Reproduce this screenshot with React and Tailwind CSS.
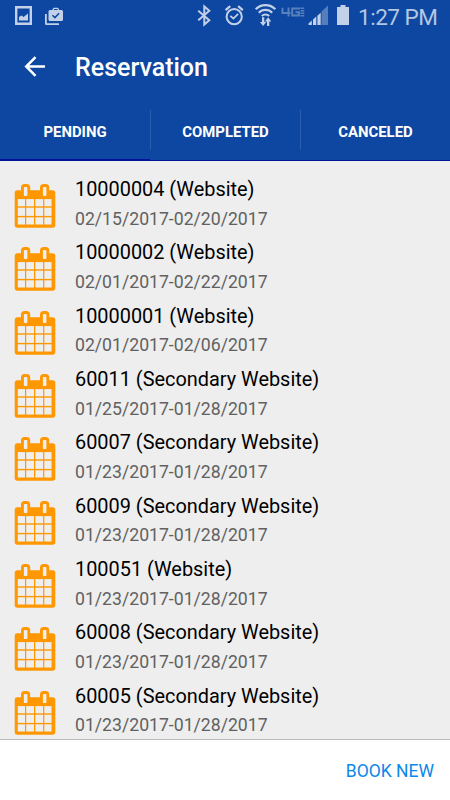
import { useState } from 'react';

const TABS = ['PENDING', 'COMPLETED', 'CANCELED'];

const RESERVATIONS = [
  { id: '10000004', source: 'Website', dates: '02/15/2017-02/20/2017' },
  { id: '10000002', source: 'Website', dates: '02/01/2017-02/22/2017' },
  { id: '10000001', source: 'Website', dates: '02/01/2017-02/06/2017' },
  { id: '60011', source: 'Secondary Website', dates: '01/25/2017-01/28/2017' },
  { id: '60007', source: 'Secondary Website', dates: '01/23/2017-01/28/2017' },
  { id: '60009', source: 'Secondary Website', dates: '01/23/2017-01/28/2017' },
  { id: '100051', source: 'Website', dates: '01/23/2017-01/28/2017' },
  { id: '60008', source: 'Secondary Website', dates: '01/23/2017-01/28/2017' },
  { id: '60005', source: 'Secondary Website', dates: '01/23/2017-01/28/2017' },
];

function CalendarIcon() {
  return (
    <svg width="42" height="44" viewBox="0 0 42 44" className="shrink-0">
      <rect x="0.7" y="6.2" width="40.6" height="37.5" rx="2.6" fill="#ff9800" />
      <rect x="7" y="0" width="9.2" height="15" rx="3.6" fill="#ff9800" />
      <rect x="26" y="0" width="9.2" height="15" rx="3.6" fill="#ff9800" />
      <g fill="#eeeeee">
        <rect x="9.9" y="2.9" width="3.5" height="9.2" rx="0.8" />
        <rect x="28.9" y="2.9" width="3.5" height="9.2" rx="0.8" />
        {[15.1, 23.7, 33.3].map((y, row) =>
          [3.8, 12.2, 21.3, 30.3].map((x, col) => (
            <rect
              key={`${x}-${y}`}
              x={x}
              y={y}
              width={col === 0 || col === 3 ? 7.2 : 7.8}
              height={row === 1 ? 8.2 : 7.2}
            />
          ))
        )}
      </g>
    </svg>
  );
}

function StatusBar() {
  return (
    <div className="flex h-8 items-center text-[#c3d1e8]">
      <svg width="450" height="32" viewBox="0 0 450 32" fill="currentColor">
        {/* screenshot saved */}
        <path fillRule="evenodd" d="M15 6h17v19H15zM17.4 8.6v13.8h12.2V8.6z" />
        <path d="M19 20.500v-3.500l2.500-1.500 2 1.500 4.500-3.500v7z" />
        {/* briefcase */}
        <path d="M45 14h1.800v9.300H59V25H46.500a1.500 1.500 0 0 1-1.500-1.500z" />
        <path
          fillRule="evenodd"
          d="M50 10h2.600V9l1.200-1.200h4L59 9v1h2.500a1.500 1.500 0 0 1 1.500 1.500v8a1.500 1.500 0 0 1-1.500 1.500H50a1.500 1.500 0 0 1-1.500-1.500v-8A1.500 1.500 0 0 1 50 10zM54 10h3.600V9H54z"
        />
        <path d="M52.400 15.300l2.500 2.300 4.200-4.300" fill="none" stroke="#0d47a1" strokeWidth="1.500" />
        {/* bluetooth */}
        <path
          d="M198.300 10.800l11 9.400-5 4.300V6.500l5 4.300-11 9.400"
          fill="none"
          stroke="currentColor"
          strokeWidth="2"
        />
        {/* alarm */}
        <g fill="none" stroke="currentColor">
          <circle cx="234.200" cy="16.700" r="7.600" strokeWidth="2" />
          <path d="M225.600 10.200l4.600-4M242.800 10.200l-4.600-4" strokeWidth="2.200" />
          <path d="M230.300 15.800l3.100 2.700 4.700-4.700" strokeWidth="1.700" />
        </g>
        {/* wifi with traffic arrows */}
        <g fill="none" stroke="currentColor" strokeWidth="2.100">
          <path d="M255.700 9.300a13.700 13.700 0 0 1 19.600 0" />
          <path d="M258.800 12.700a9.400 9.400 0 0 1 13.400 0" />
          <path d="M261.800 16a5.200 5.200 0 0 1 7.400 0" />
        </g>
        <path d="M262 17.300h2.300v4.600h2l-3.200 4.200-3.200-4.200h2.100zM267 26.100h2.300v-4.600h2l-3.200-4.200-3.200 4.200h2.100z" />
        {/* 4G LTE */}
        <g opacity="0.42">
          <g fill="none" stroke="currentColor" strokeWidth="1.900">
            <path d="M282.500 7.800v5.200h8M288.500 7.500v9" />
            <path d="M300 8.500h-7.800v7h6.800v-3.300h-3.500" />
          </g>
          <path d="M300.500 7.500h3.800v1.400h-3.800zM300.500 10h3.800v1.400h-3.800zM300.500 12.500h3.800v1.400h-3.800zM300.500 15h3.800v1.400h-3.800z" />
        </g>
        {/* signal */}
        <path d="M308.500 25v-1.500l3.300-2.900V25zM313 25v-5.400l3.300-3V25zM317.400 25v-9.200l3.300-3V25z" />
        <path d="M321.500 25V11.500l6.500-6V25z" opacity="0.4" />
        {/* battery */}
        <path d="M340.500 5h5v2h3.500v18h-12V7h3.500z" />
        <text x="358" y="25" fontFamily="Roboto, sans-serif" fontSize="22.500" fontWeight="400" fill="#b5c6e1" textLength="80">
          1:27 PM
        </text>
      </svg>
    </div>
  );
}

function Reservation({ id, source, dates }) {
  return (
    <li className="flex h-[63.35px] gap-[19px] pl-3.5 pt-[14px]">
      <CalendarIcon />
      <div className="whitespace-nowrap">
        <p className="-mt-1.5 text-[19.9px] leading-6 text-black">
          {id} ({source})
        </p>
        <p className="mt-[6.7px] text-[17.65px] leading-[21px] text-[#616161]">{dates}</p>
      </div>
    </li>
  );
}

function App() {
  const [activeTab, setActiveTab] = useState('PENDING');

  return (
    <div className="flex h-[800px] w-[450px] flex-col overflow-hidden bg-[#eeeeee] font-['Roboto',sans-serif]">
      <header className="h-[161px] shrink-0 bg-[#0d47a1] text-white">
        <StatusBar />
        <div className="flex h-[70px] items-center gap-[29px] pl-6">
          <button aria-label="Back">
            <svg width="22" height="22" viewBox="0 0 22 22" fill="none" stroke="currentColor" strokeWidth="2.500">
              <path d="M21 10.500H3M11.500 1.200l-9.300 9.300 9.300 9.300" />
            </svg>
          </button>
          <h1 className="pt-px text-[25px] font-medium leading-8">Reservation</h1>
        </div>
        <nav className="flex h-[59px] border-b border-[#00149b]">
          {TABS.map((tab) => (
            <button
              key={tab}
              onClick={() => setActiveTab(tab)}
              className={`flex flex-1 items-center justify-center border-b pt-px text-[14.9px] font-bold ${
                tab === activeTab ? 'border-[#00149b]' : 'border-transparent'
              }`}
            >
              {tab !== 'PENDING' && <span className="mb-[3px] h-10 w-px bg-[#2b5eae]" />}
              <span className="flex-1 pt-0.5">{tab}</span>
            </button>
          ))}
        </nav>
      </header>

      <ul className="h-[578px] shrink-0 overflow-hidden pt-[9px]">
        {RESERVATIONS.map((item) => (
          <Reservation key={item.id} {...item} />
        ))}
      </ul>

      <footer className="flex flex-1 items-center justify-end border-t border-[#bbbbbb] bg-white pr-4 pt-0.5">
        <button className="text-[17.5px] text-[#0d87e9]">BOOK NEW</button>
      </footer>
    </div>
  );
}

export default App;
